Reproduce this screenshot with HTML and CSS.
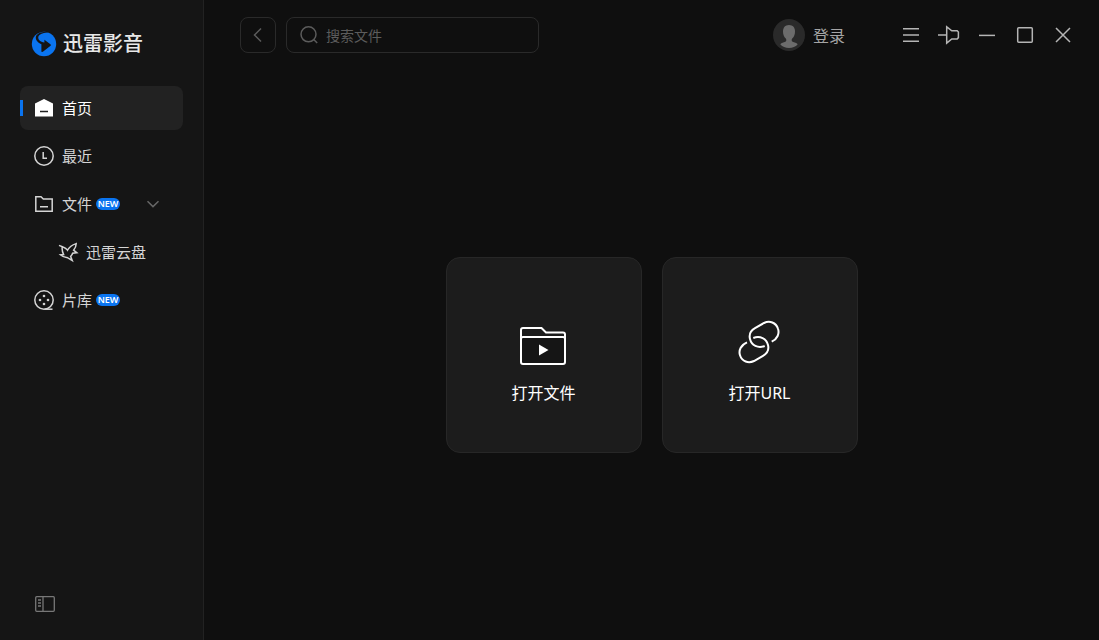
FILE: index.html
```html
<!DOCTYPE html>
<html lang="zh-CN">

	<head>
		<meta charset="utf-8">
		<title>迅雷影音</title>
		<link rel="stylesheet" href="styles.css">
	</head>

	<body>
		<aside class="sidebar">
			<div class="logo">
				<svg width="26" height="26" viewBox="0 0 26 26">
					<circle cx="13" cy="13" r="12.2" fill="#0a74f0"/>
					<path fill="#151515" d="M18 1.2C12 .2 6.4 1.6 5 5.2C4 8.4 6.4 11.4 10.4 13.2V20.4Q11 21.4 12.2 20.6L19.6 14.8Q20.4 14 19.4 13.2L13.4 8.8V11.4C9.4 11 6.6 8.6 7.4 5.4C8.6 2.6 13.4 1.6 18 1.2Z"/>
				</svg>
				<span class="logo-text">迅雷影音</span>
			</div>
			<nav class="menu">
				<a class="item selected" href="#">
					<svg width="20" height="20" viewBox="0 0 20 20">
						<path fill="#fff" d="M10 .9L19 5.6V18.6H1V5.6Z"/>
						<path stroke="#222" stroke-width="1.5" d="M6 13.5h8"/>
					</svg>
					<span>首页</span>
				</a>
				<a class="item" href="#">
					<svg class="line" width="20" height="20" viewBox="0 0 20 20">
						<circle cx="10" cy="10" r="9.2"/>
						<path d="M9.2 6v6.2H13"/>
					</svg>
					<span>最近</span>
				</a>
				<a class="item" href="#">
					<svg class="line" width="20" height="20" viewBox="0 0 20 20">
						<path d="M1.8 2.8H7L9.3 5H18.2V17.2H1.8ZM6 12.7h8"/>
					</svg>
					<span>文件</span>
					<span class="badge">NEW</span>
					<svg class="arrow" width="14" height="14" viewBox="0 0 14 14">
						<path d="M1.5 4.2L7 9.6L12.5 4.2"/>
					</svg>
				</a>
				<a class="item sub" href="#">
					<svg class="line" width="20" height="20" viewBox="0 0 20 20">
						<path d="M1 3.4L5 5Q8 6 9.5 8.2Q12 3.5 18.2 1.6Q18.2 5 15.6 8.2L18.8 10.8L14.6 11.2Q13.8 13.6 12.6 14.4L14.2 18.4L9 15.4Q5.5 15.6 2.4 12.8L5.6 12.6Q3.8 9 4.2 5"/>
					</svg>
					<span>迅雷云盘</span>
				</a>
				<a class="item" href="#">
					<svg class="line" width="20" height="20" viewBox="0 0 20 20">
						<circle cx="10" cy="10" r="9.2"/>
						<path d="M10.5 19.2H18.5"/>
						<g fill="#d5d5d5" stroke="none">
							<circle cx="10" cy="6" r="1.3"/>
							<circle cx="6" cy="10" r="1.3"/>
							<circle cx="14" cy="10" r="1.3"/>
							<circle cx="10" cy="14" r="1.3"/>
						</g>
					</svg>
					<span>片库</span>
					<span class="badge">NEW</span>
				</a>
			</nav>
			<button class="fold" aria-label="收起侧栏">
				<svg width="20" height="16" viewBox="0 0 20 16">
					<rect x=".7" y=".7" width="18.6" height="14.6" rx="1"/>
					<path d="M8 1v14M3 4h3M3 7h3M3 10h3"/>
				</svg>
			</button>
		</aside>
		<main class="main">
			<header class="header">
				<button class="back" aria-label="返回">
					<svg width="20" height="20" viewBox="0 0 20 20">
						<path d="M13 3.5L6.5 10L13 16.5"/>
					</svg>
				</button>
				<label class="search">
					<svg width="20" height="20" viewBox="0 0 20 20">
						<circle cx="9.5" cy="9.3" r="7.5"/>
						<path d="M15 14.8L18.2 18"/>
					</svg>
					<input type="text" placeholder="搜索文件" aria-label="搜索文件">
				</label>
				<button class="user">
					<svg width="32" height="32" viewBox="0 0 32 32">
						<circle cx="16" cy="16" r="16" fill="#2a2a2a"/>
						<path fill="#6c6c6c" d="M16 6C12 6 10 8.8 10 12.4C10 15.6 11 17.8 12.8 19.4C14 21.4 13.2 22.6 11 23.2C8.8 23.8 7.6 24.4 7.4 25.6C9.4 28 12.4 29 16 29S22.6 28 24.6 25.6C24.4 24.4 23.2 23.8 21 23.2C18.8 22.6 18 21.4 19.2 19.4C21 17.8 22 15.6 22 12.4C22 8.8 20 6 16 6Z"/>
					</svg>
					<span>登录</span>
				</button>
				<div class="window-btns">
					<button aria-label="菜单">
						<svg width="24" height="24" viewBox="0 0 24 24">
							<path d="M4 5.7h16M4 12h16M4 18.3h16"/>
						</svg>
					</button>
					<button aria-label="置顶">
						<svg width="24" height="24" viewBox="0 0 24 24">
							<path d="M1 12H9.7M9.7 3.8V20.2L14.8 16H20.2L21.4 14.6V9L20.2 7.8H14.8Z"/>
						</svg>
					</button>
					<button aria-label="最小化">
						<svg width="24" height="24" viewBox="0 0 24 24">
							<path d="M4 12.4h16"/>
						</svg>
					</button>
					<button aria-label="最大化">
						<svg width="24" height="24" viewBox="0 0 24 24">
							<rect x="4.7" y="4.7" width="14.6" height="14.6" rx="1"/>
						</svg>
					</button>
					<button aria-label="关闭">
						<svg width="24" height="24" viewBox="0 0 24 24">
							<path d="M5 5L19 19M19 5L5 19"/>
						</svg>
					</button>
				</div>
			</header>
			<section class="content">
				<button class="card">
					<svg width="48" height="48" viewBox="0 0 48 48">
						<path fill="#151515" d="M1 18V41Q1 43 3 43H43Q45 43 45 41V18Q45 16 43 16H3Q1 16 1 18Z"/>
						<path d="M1 18V9Q1 7 3 7H21.5L26 11.5H43Q45 11.5 45 13.5V18"/>
						<path fill="#fff" stroke="none" d="M19 23.5L28.5 29L19 34.5Z"/>
					</svg>
					<span>打开文件</span>
				</button>
				<button class="card">
					<svg width="48" height="48" viewBox="0 0 48 48">
						<path d="M35.7 20.7C41.5 18 43.6 12.5 42 7.8C40 1.3 33.5 -.6 28 2L19 7.2C14.5 9.7 13 14 14 18C15.5 24.5 22 27.5 28.7 25"/>
						<path d="M11 21.3C4.8 24 2.4 29.5 4 34.2C6 40.7 12.5 42.6 18 40L27 34.8C31.5 32.3 33 28 32 24C30.5 17.5 24 14.5 17.3 17"/>
					</svg>
					<span>打开URL</span>
				</button>
			</section>
		</main>
	</body>

</html>
```
FILE: styles.css
```css
* {
	box-sizing: border-box;
}
body {
	display: flex;
	margin: 0;
	min-height: 100vh;
	background-color: #0f0f0f;
	color: #d5d5d5;
	font-family: "Noto Sans", "Noto Sans CJK SC", sans-serif;
	font-size: 15px;
}
svg {
	display: block;
	flex: none;
	fill: none;
	overflow: visible;
}
button {
	padding: 0;
	border: none;
	background: none;
	color: inherit;
	font: inherit;
	cursor: pointer;
}

/* 侧栏 */
.sidebar {
	display: flex;
	flex: none;
	flex-direction: column;
	width: 204px;
	padding: 28px 20px;
	border-right: solid 1px #222;
	background-color: #151515;
}
.logo {
	display: flex;
	align-items: center;
	gap: 6px;
	height: 32px;
	margin-bottom: 26px;
	padding-left: 11px;
}
.logo-text {
	color: #e8e8e8;
	font-size: 20px;
	font-weight: 500;
	line-height: 32px;
}
.menu {
	display: flex;
	flex-direction: column;
	gap: 4px;
}
.item {
	display: flex;
	position: relative;
	align-items: center;
	gap: 8px;
	height: 44px;
	padding: 0 23px 0 14px;
	border-radius: 8px;
	color: #d5d5d5;
	line-height: 20px;
	text-decoration: none;
}
.item.selected {
	background-color: #222;
	color: #fff;
}
.item.selected::before {
	position: absolute;
	top: 14px;
	left: 0;
	width: 3px;
	height: 16px;
	background-color: #0a74f0;
	content: "";
}
.item.sub {
	padding-left: 38px;
}
.line {
	stroke: #d5d5d5;
	stroke-width: 1.5;
}
.badge {
	width: 24px;
	height: 12px;
	margin-left: -4px;
	border-radius: 6px;
	background-color: #0a74f0;
	color: #fff;
	font-size: 9px;
	font-weight: 600;
	line-height: 12px;
	text-align: center;
}
.arrow {
	margin-left: auto;
	stroke: #666;
	stroke-width: 1.5;
}
.fold {
	margin-top: auto;
	margin-left: 15px;
	stroke: #777;
	stroke-width: 1.3;
}

/* 顶栏 */
.main {
	display: flex;
	flex: 1;
	flex-direction: column;
	min-width: 0;
}
.header {
	display: flex;
	align-items: center;
	height: 70px;
	padding: 0 24px 0 36px;
}
.back,
.search {
	display: flex;
	align-items: center;
	height: 36px;
	border: solid 1px #2a2a2a;
	border-radius: 8px;
	stroke: #5c5c5c;
	stroke-width: 1.5;
}
.back {
	justify-content: center;
	width: 36px;
	margin-right: 10px;
}
.search {
	gap: 7px;
	width: 253px;
	padding: 0 12px;
}
.search input {
	flex: 1;
	min-width: 0;
	padding: 0;
	border: none;
	outline: none;
	background: none;
	color: #d5d5d5;
	font: inherit;
	font-size: 14px;
}
.search input::placeholder {
	color: #5c5c5c;
}
.user {
	display: flex;
	align-items: center;
	gap: 8px;
	margin-right: 54px;
	margin-left: auto;
	color: #a5a5a5;
	font-size: 16px;
}
.window-btns {
	display: flex;
	gap: 14px;
	stroke: #b5b5b5;
	stroke-width: 1.5;
}

/* 打开入口 */
.content {
	display: flex;
	flex: 1;
	align-items: center;
	justify-content: center;
	gap: 20px;
}
.card {
	display: flex;
	flex-direction: column;
	align-items: center;
	gap: 12px;
	width: 196px;
	height: 196px;
	padding-top: 63px;
	border: solid 1px #272727;
	border-radius: 14px;
	background-color: #1c1c1c;
	color: #fff;
	font-size: 16px;
	line-height: 24px;
	stroke: #fff;
	stroke-width: 2;
}
.card span,
.search input {
	stroke: none;
}
```
